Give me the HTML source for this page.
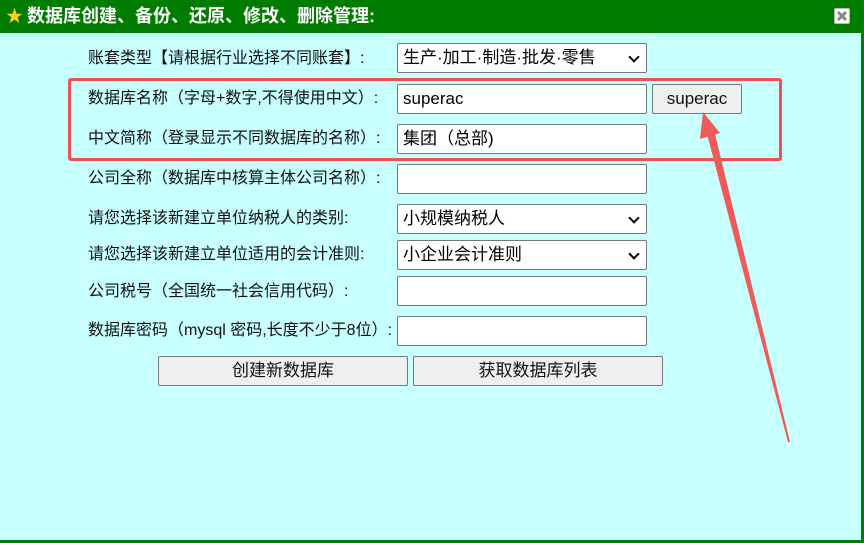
<!DOCTYPE html>
<html><head><meta charset="utf-8"><style>
*{box-sizing:border-box;margin:0;padding:0}
body{width:864px;height:543px;overflow:hidden;background:#c8ffff;font-family:"Liberation Sans","Noto Sans CJK SC",sans-serif;position:relative}
#title{position:absolute;left:0;top:0;width:864px;height:33px;background:#007c00;color:#fff;font-weight:bold;font-size:18px;line-height:33px;padding-left:27px}
#star{position:absolute;left:6px;top:8px;color:#ffd21a;font-size:17px;line-height:17px}
#close{position:absolute;left:834px;top:8px;width:16px;height:16px;background:#fff;border:1px solid #bbb;border-radius:2px}
#rb{position:absolute;left:861px;top:33px;width:3px;height:510px;background:#007c00}
#bb{position:absolute;left:0;top:540px;width:864px;height:3px;background:#007c00}
.l{position:absolute;left:88px;font-size:16px;color:#111;line-height:20px}
.f{position:absolute;left:397px;width:250px;height:30px;background:#fff;border:1px solid #777;border-radius:2px;font-size:17px;line-height:28px;padding-left:5px;color:#000}
.sel::after{content:"";position:absolute;right:8px;top:9px;width:6px;height:6px;border-right:2px solid #000;border-bottom:2px solid #000;transform:rotate(45deg)}
.b{position:absolute;height:30px;background:#efefef;border:1px solid #777;border-radius:2px;font-size:17px;text-align:center;line-height:28px;color:#111}
#red{position:absolute;left:68px;top:78px;width:714px;height:83px;border:3px solid #f05050;border-radius:3px}
</style></head><body>
<div id="title"><span id="star">★</span>数据库创建、备份、还原、修改、删除管理:</div>
<div id="close"><svg width="14" height="14" viewBox="0 0 14 14"><path d="M3 3L11 11M11 3L3 11" stroke="#888" stroke-width="3"/></svg></div>
<div id="rb"></div><div id="bb"></div>

<div class="l" style="top:49px">账套类型【请根据行业选择不同账套】:</div>
<div class="f sel" style="top:43px">生产·加工·制造·批发·零售</div>
<div class="l" style="top:89px">数据库名称（字母+数字,不得使用中文）:</div>
<div class="f" style="top:84px">superac</div>
<div class="b" style="left:652px;top:84px;width:90px">superac</div>
<div class="l" style="top:129px">中文简称（登录显示不同数据库的名称）:</div>
<div class="f" style="top:124px">集团（总部)</div>
<div class="l" style="top:169px">公司全称（数据库中核算主体公司名称）:</div>
<div class="f" style="top:164px"></div>
<div class="l" style="top:209px">请您选择该新建立单位纳税人的类别:</div>
<div class="f sel" style="top:204px">小规模纳税人</div>
<div class="l" style="top:245px">请您选择该新建立单位适用的会计准则:</div>
<div class="f sel" style="top:240px">小企业会计准则</div>
<div class="l" style="top:282px">公司税号（全国统一社会信用代码）:</div>
<div class="f" style="top:276px"></div>
<div class="l" style="top:321px">数据库密码（mysql 密码,长度不少于8位）:</div>
<div class="f" style="top:316px"></div>
<div class="b" style="left:158px;top:356px;width:250px">创建新数据库</div>
<div class="b" style="left:413px;top:356px;width:250px">获取数据库列表</div>
<div id="red"></div>
<svg style="position:absolute;left:0;top:0" width="864" height="543">
<path d="M707 134L715 134L790 442L788 442Z" fill="#f05a5a"/>
<path d="M703 112L700 139L720 133Z" fill="#f05a5a"/>
</svg>
</body></html>
